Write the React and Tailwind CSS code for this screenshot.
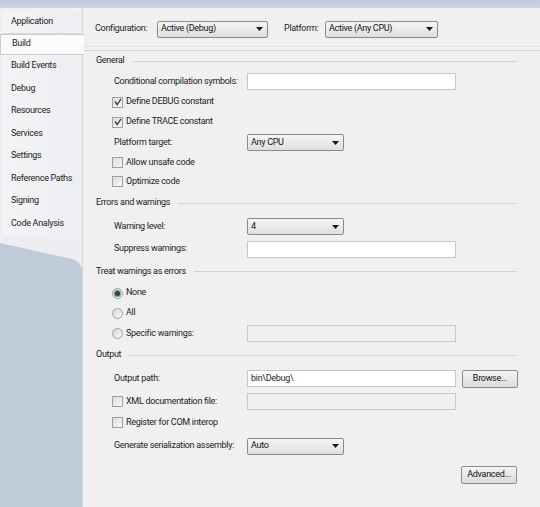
import React from 'react';

const font = { fontFamily: 'Roboto, "Liberation Sans", sans-serif', letterSpacing: '-0.3px' };

const tabs = [
  'Application',
  'Build',
  'Build Events',
  'Debug',
  'Resources',
  'Services',
  'Settings',
  'Reference Paths',
  'Signing',
  'Code Analysis',
];

const Arrow = () => (
  <svg width="7" height="4" viewBox="0 0 7 4" className="shrink-0">
    <path d="M0 0h7L3.5 4z" fill="#1a1a1a" />
  </svg>
);

const Select = ({ value, width }) => (
  <div
    className={`${width} h-[17px] flex items-center justify-between pl-[3px] pr-[4px] border border-[#8a8a8a] rounded-[2px] bg-gradient-to-b from-[#f6f6f6] to-[#dedede] text-[#111]`}
  >
    <span>{value}</span>
    <Arrow />
  </div>
);

const Input = ({ value, disabled, width = 'w-[209px]' }) => (
  <div
    className={`${width} h-[17px] flex items-center px-[3px] border ${
      disabled ? 'border-[#c9c9c9] bg-[#f0f0f0]' : 'border-[#c4c8cc] bg-white'
    }`}
  >
    {value}
  </div>
);

const Check = ({ checked }) => (
  <div className="w-[11px] h-[11px] border border-[#a0a0a0] bg-gradient-to-br from-[#dcdcdc] to-[#f8f8f8] flex items-center justify-center shrink-0">
    {checked && (
      <svg width="8" height="8" viewBox="0 0 8 8">
        <path d="M1 3.5l2.2 3L7 0.8" fill="none" stroke="#3a3a3a" strokeWidth="1.3" />
      </svg>
    )}
  </div>
);

const Radio = ({ checked }) => (
  <div className="w-[11px] h-[11px] rounded-full border border-[#a0a0a0] bg-gradient-to-br from-[#d8d8d8] to-[#f8f8f8] flex items-center justify-center shrink-0">
    {checked && <div className="w-[5px] h-[5px] rounded-full bg-[#2d4a3e] ring-1 ring-[#7f9a8c]" />}
  </div>
);

const Section = ({ title, h }) => (
  <div className={`${h} flex items-center pl-[13px] pr-[23px] gap-[8px]`}>
    <span className="text-[#1a1a1a]">{title}</span>
    <div className="flex-1 h-px bg-[#d2d2d2]" />
  </div>
);

const Row = ({ h, label, children }) => (
  <div className={`${h} flex items-center pl-[31px]`}>
    <div className="w-[133px] shrink-0 flex items-center">{label}</div>
    <div className="flex items-center gap-[6px]">{children}</div>
  </div>
);

const CheckLabel = ({ checked, text }) => (
  <div className="flex items-center gap-[3px] -ml-[2px]">
    <Check checked={checked} />
    <span>{text}</span>
  </div>
);

const RadioLabel = ({ checked, text }) => (
  <div className="flex items-center gap-[3px] -ml-[2px]">
    <Radio checked={checked} />
    <span>{text}</span>
  </div>
);

const Button = ({ children }) => (
  <div className="w-[56px] h-[18px] flex items-center justify-center border border-[#8c8c8c] rounded-[2px] bg-gradient-to-b from-[#f4f4f4] to-[#dcdcdc] text-[#111]">
    {children}
  </div>
);

export default function App() {
  return (
    <div
      className="w-[540px] h-[507px] flex flex-col bg-[#c4cee0] text-[9px] text-[#1c1c1c] whitespace-nowrap overflow-hidden"
      style={font}
    >
      <div className="h-[8px] shrink-0 bg-gradient-to-b from-[#c0cbdf] to-[#cbd4e4]" />
      <div className="flex-1 flex min-h-0">
        {/* tab strip */}
        <div className="w-[82px] shrink-0 flex flex-col bg-[#bfcbd8]">
          <div className="bg-[#eef0f3] pt-[3px]">
            {tabs.map((t) =>
              t === 'Build' ? (
                <div
                  key={t}
                  className="h-[21px] flex items-center pl-[11px] bg-[#fbfbfb] border-y border-l border-[#c9ccd1] relative z-10 mr-[-2px]"
                >
                  {t}
                </div>
              ) : (
                <div
                  key={t}
                  className={`h-[22.5px] flex items-center pl-[11px] ml-[3px] bg-gradient-to-r from-[#f3f4f6] to-[#eceef1] ${
                    t === 'Application' ? 'border-b border-[#d6d9dd] rounded-tl-[3px]' : ''
                  }`}
                >
                  <span className="-ml-[3px]">{t}</span>
                </div>
              )
            )}
            <div className="h-[8px] ml-[3px] bg-[#eceef1]" />
          </div>
          <svg width="82" height="26" viewBox="0 0 82 26" className="block">
            <path d="M0 0H82V26Q80 18 72 16L0 0Z" fill="#eceef1" />
          </svg>
        </div>

        {/* property page */}
        <div className="flex-1 flex flex-col bg-[#f0f0f0] border-l border-[#d3d7dc]">
          <div className="h-[39px] shrink-0 flex items-center pl-[12px] pt-[4px] border-b border-[#e4e4e4]">
            <span className="w-[62px]">Configuration:</span>
            <Select value="Active (Debug)" width="w-[111px]" />
            <span className="ml-[16px] w-[41px]">Platform:</span>
            <Select value="Active (Any CPU)" width="w-[113px]" />
          </div>
          <div className="h-[4px] shrink-0 border-b border-[#d8d8d8]" />

          <Section title="General" h="h-[20px]" />
          <Row h="h-[21px]" label="Conditional compilation symbols:">
            <Input />
          </Row>
          <Row h="h-[20px]" label={<CheckLabel checked text="Define DEBUG constant" />} />
          <Row h="h-[20px]" label={<CheckLabel checked text="Define TRACE constant" />} />
          <Row h="h-[21px]" label="Platform target:">
            <Select value="Any CPU" width="w-[97px]" />
          </Row>
          <Row h="h-[19px]" label={<CheckLabel text="Allow unsafe code" />} />
          <Row h="h-[19px]" label={<CheckLabel text="Optimize code" />} />

          <Section title="Errors and warnings" h="h-[24px]" />
          <Row h="h-[23px]" label="Warning level:">
            <Select value="4" width="w-[97px]" />
          </Row>
          <Row h="h-[22px]" label="Suppress warnings:">
            <Input />
          </Row>

          <Section title="Treat warnings as errors" h="h-[23px]" />
          <Row h="h-[20px]" label={<RadioLabel checked text="None" />} />
          <Row h="h-[20px]" label={<RadioLabel text="All" />} />
          <Row h="h-[21px]" label={<RadioLabel text="Specific warnings:" />}>
            <Input disabled />
          </Row>

          <Section title="Output" h="h-[22px]" />
          <Row h="h-[25px]" label="Output path:">
            <Input value="bin\Debug\" />
            <Button>Browse...</Button>
          </Row>
          <Row h="h-[21px]" label={<CheckLabel text="XML documentation file:" />}>
            <Input disabled />
          </Row>
          <Row h="h-[21px]" label={<CheckLabel text="Register for COM interop" />} />
          <Row h="h-[26px]" label="Generate serialization assembly:">
            <Select value="Auto" width="w-[97px]" />
          </Row>

          <div className="flex justify-end pr-[23px] pt-[7px]">
            <Button>Advanced...</Button>
          </div>
        </div>
      </div>
    </div>
  );
}
